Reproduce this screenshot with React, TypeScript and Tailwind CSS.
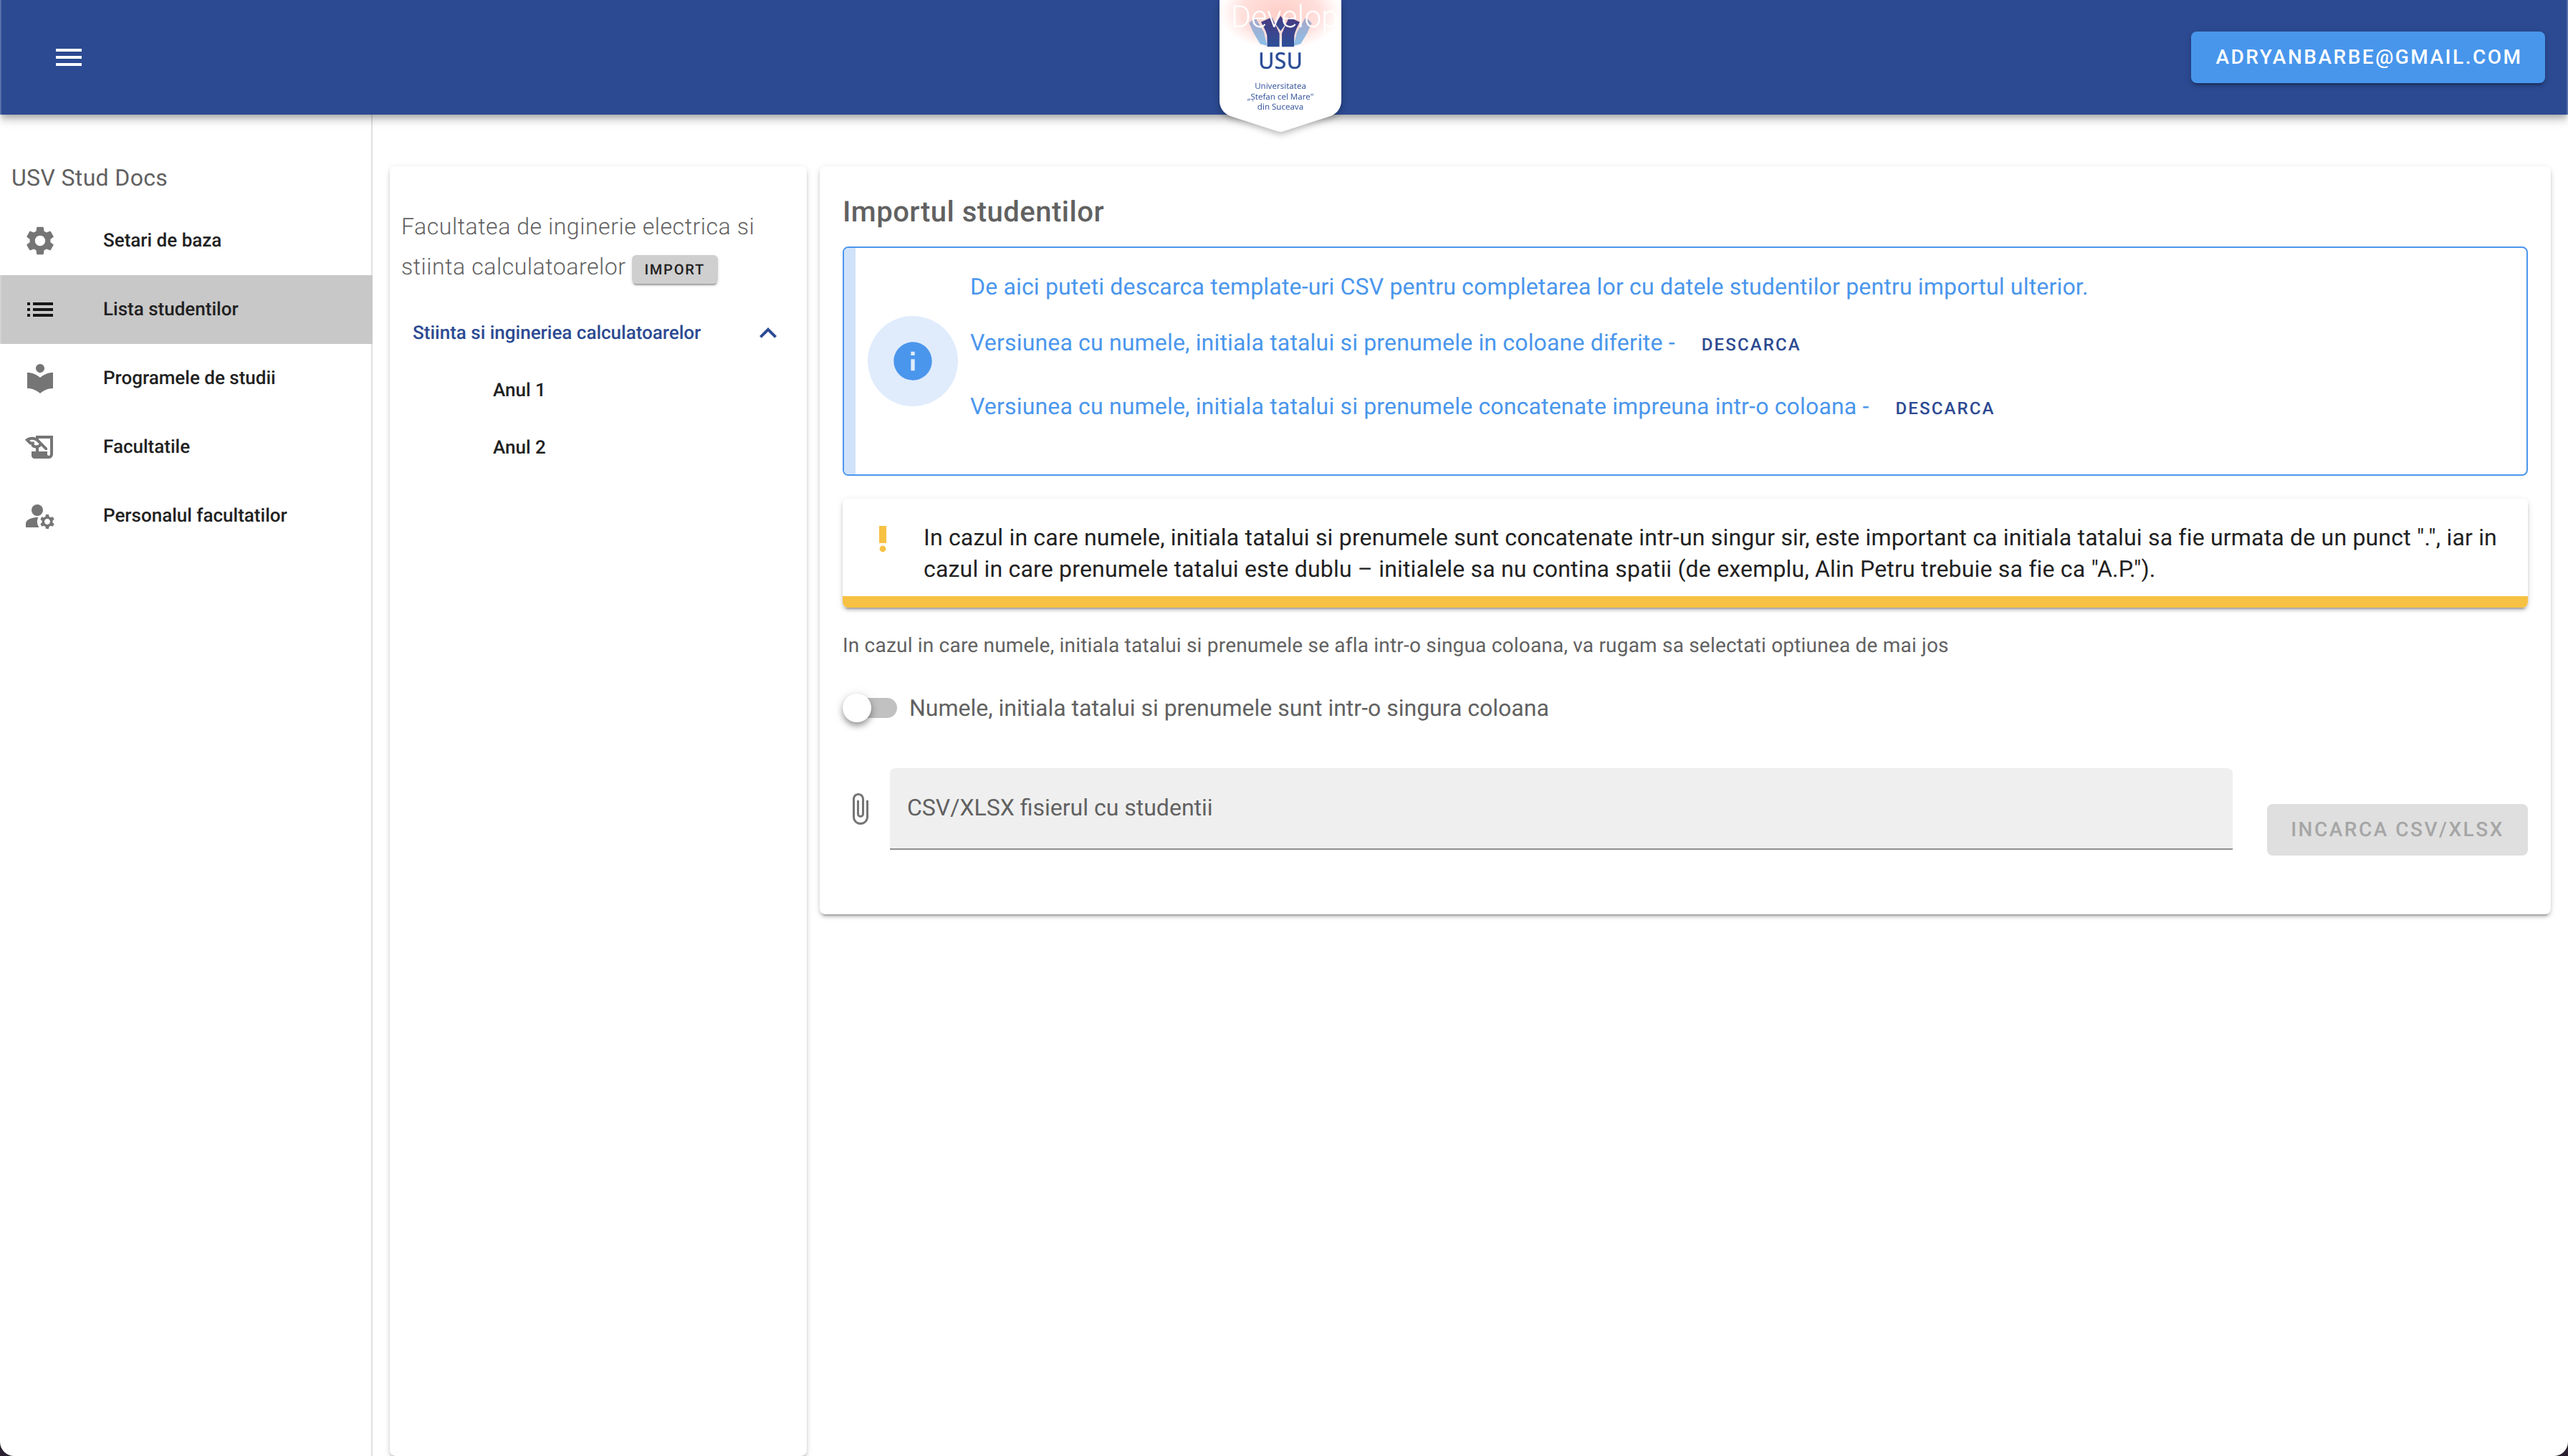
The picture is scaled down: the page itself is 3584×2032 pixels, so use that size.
import React from 'react';
import {
  MdAttachFile,
  MdExpandLess,
  MdHistoryEdu,
  MdInfo,
  MdList,
  MdLocalLibrary,
  MdManageAccounts,
  MdMenu,
  MdSettings,
} from 'react-icons/md';

const navItems = [
  { label: 'Setari de baza', icon: MdSettings },
  { label: 'Lista studentilor', icon: MdList, active: true },
  { label: 'Programele de studii', icon: MdLocalLibrary },
  { label: 'Facultatile', icon: MdHistoryEdu },
  { label: 'Personalul facultatilor', icon: MdManageAccounts },
];

function Logo() {
  return (
    <svg
      className="absolute left-[1702px] top-0 z-20 drop-shadow-[0_3px_5px_rgba(0,0,0,0.3)]"
      width="170"
      height="190"
      viewBox="0 0 170 190"
    >
      <defs>
        <radialGradient id="glow" cx="50%" cy="50%" r="50%">
          <stop offset="0%" stopColor="#ff9c90" stopOpacity="0.5" />
          <stop offset="65%" stopColor="#ffa99f" stopOpacity="0.36" />
          <stop offset="100%" stopColor="#ffb9b0" stopOpacity="0" />
        </radialGradient>
        <linearGradient id="wing" x1="0" y1="0" x2="0" y2="1">
          <stop offset="0%" stopColor="#4a3a82" />
          <stop offset="100%" stopColor="#2c4f97" />
        </linearGradient>
        <linearGradient id="side" x1="0" y1="0" x2="0" y2="1">
          <stop offset="0%" stopColor="#a9a6c8" />
          <stop offset="100%" stopColor="#8cc0e8" />
        </linearGradient>
      </defs>
      <path d="M0 0H170V140C170 150 165 158 155 162L90 183Q85 185 80 183L15 162C5 158 0 150 0 140Z" fill="#fff" />
      <ellipse cx="85" cy="18" rx="85" ry="52" fill="url(#glow)" />
      <g transform="translate(-62 0) scale(0.3333)">
        <path d="M310 97 335 72 372 135 386 192 356 184 330 140Z" fill="url(#side)" />
        <path d="M572 97 547 72 510 135 496 192 526 184 552 140Z" fill="url(#side)" />
        <path d="M360 92 405 72 437 140V196H386L385 150C382 130 370 112 360 92Z" fill="url(#wing)" />
        <path d="M522 92 477 72 447 140V196H498L499 150C502 130 512 112 522 92Z" fill="url(#wing)" />
        <path d="M442 66 464 100 442 130 420 100Z" fill="url(#wing)" />
      </g>
      <text x="85" y="96" textAnchor="middle" textLength="62" lengthAdjust="spacingAndGlyphs" fill="#2d4e97" fontFamily="Noto Sans, sans-serif" fontWeight="500" fontSize="32">
        USU
      </text>
      <g fill="#3c5aa0" fontFamily="Noto Sans, sans-serif" fontSize="11.5" textAnchor="middle">
        <text x="85" y="124">Universitatea</text>
        <text x="85" y="139">„Ștefan cel Mare"</text>
        <text x="85" y="153">din Suceava</text>
      </g>
      <text x="91" y="38" textAnchor="middle" fill="#fff" fontFamily="Roboto, sans-serif" fontWeight="300" fontSize="43">
        Develop
      </text>
    </svg>
  );
}

function Sidebar() {
  return (
    <aside className="w-[520px] shrink-0 border-r-2 border-[#e0e0e0] pt-[64px]">
      <div className="px-[16px] text-[32px] leading-[48px] tracking-[0.35px] text-[#616161] mb-[16px]">USV Stud Docs</div>
      {navItems.map((item) => (
        <div
          key={item.label}
          className={`flex h-[96px] items-center pl-[32px] ${item.active ? 'bg-[#c8c8c8] -mr-[2px]' : ''}`}
        >
          <item.icon className={`w-[48px] h-[48px] ${item.active ? 'text-[#181818]' : 'text-[#757575]'}`} />
          <span className="ml-[64px] pt-[1px] text-[26px] font-medium text-[#212121]">{item.label}</span>
        </div>
      ))}
    </aside>
  );
}

function TreePanel() {
  return (
    <section className="w-[582px] shrink-0 rounded-[8px] bg-white px-[16px] pt-[56px] shadow-[0_6px_2px_-4px_rgba(0,0,0,0.2),0_4px_4px_0_rgba(0,0,0,0.14),0_2px_10px_0_rgba(0,0,0,0.12)]">
      <div className="text-[32px] font-light leading-[56px] tracking-[0.55px] text-[#616161]">
        Facultatea de inginerie electrica si
        <br />
        stiinta calculatoarelor
        <span className="ml-[8px] inline-flex h-[40px] w-[120px] items-center justify-center rounded-[6px] bg-[#cfcfcf] align-[0px] text-[20px] font-medium tracking-[1.79px] text-[#212121] shadow-[0_4px_2px_-2px_rgba(0,0,0,0.3),0_2px_4px_0_rgba(0,0,0,0.14)]">
          IMPORT
        </span>
      </div>
      <div className="mt-[25px] flex h-[80px] items-center justify-between pl-[16px] pr-[14px] text-[#2c4a92]">
        <span className="text-[26px] font-medium">Stiinta si ingineriea calculatoarelor</span>
        <MdExpandLess className="h-[48px] w-[48px]" />
      </div>
      <div className="flex h-[80px] items-center pl-[128px] text-[26px] font-medium text-[#212121]">Anul 1</div>
      <div className="flex h-[80px] items-center pl-[128px] text-[26px] font-medium text-[#212121]">Anul 2</div>
    </section>
  );
}

function DownloadLink() {
  return <span className="ml-[37px] mt-[6px] text-[24px] font-medium tracking-[2.14px] text-[#2c4a92]">DESCARCA</span>;
}

function ImportPanel() {
  return (
    <section className="h-[1044px] flex-1 rounded-[8px] bg-white px-[32px] pt-[40px] shadow-[0_6px_2px_-4px_rgba(0,0,0,0.2),0_4px_4px_0_rgba(0,0,0,0.14),0_2px_10px_0_rgba(0,0,0,0.12)]">
      <h1 className="text-[40px] font-medium leading-[48px] tracking-[0.5px] text-[#616161]">Importul studentilor</h1>

      <div className="mt-[24px] flex h-[320px] items-center overflow-hidden rounded-[8px] border-2 border-[#4a96ec]">
        <div className="h-full w-[16px] bg-[#d0e2fa]" />
        <div className="ml-[17px] flex h-[126px] w-[126px] items-center justify-center rounded-full bg-[#e0ecfc]">
          <MdInfo className="h-[64px] w-[64px] text-[#4a96ec]" />
        </div>
        <div className="ml-[17px] self-start pt-[30px] text-[32px] leading-[48px] tracking-[0.17px] text-[#4a96ec]">
          <div>De aici puteti descarca template-uri CSV pentru completarea lor cu datele studentilor pentru importul ulterior.</div>
          <div className="mt-[27px] flex items-center">
            Versiunea cu numele, initiala tatalui si prenumele in coloane diferite -
            <DownloadLink />
          </div>
          <div className="mt-[35px] flex items-center">
            Versiunea cu numele, initiala tatalui si prenumele concatenate impreuna intr-o coloana -
            <DownloadLink />
          </div>
        </div>
      </div>

      <div className="mt-[32px] overflow-hidden rounded-[8px] shadow-[0_6px_2px_-4px_rgba(0,0,0,0.2),0_4px_4px_0_rgba(0,0,0,0.14),0_2px_10px_0_rgba(0,0,0,0.12)]">
        <div className="flex h-[136px] items-start bg-white pr-[40px]">
          <svg className="ml-[32px] mt-[32px] h-[48px] w-[48px] shrink-0 text-[#f7c143]" viewBox="0 0 24 24" fill="currentColor">
            <rect x="9.5" y="3" width="5" height="12" />
            <circle cx="12" cy="19" r="2.2" />
          </svg>
          <p className="ml-[33px] pt-[32px] text-[32px] leading-[44px] tracking-[0.19px] text-[#212121]">
            In cazul in care numele, initiala tatalui si prenumele sunt concatenate intr-un singur sir, este important ca initiala tatalui sa fie urmata de un punct ".", iar in cazul in care prenumele tatalui este dublu – initialele sa nu contina spatii (de exemplu, Alin Petru trebuie sa fie ca "A.P.").
          </p>
        </div>
        <div className="h-[16px] bg-[#f7c143]" />
      </div>

      <p className="mt-[37px] text-[28px] leading-[32px] tracking-[0.2px] text-[#616161]">
        In cazul in care numele, initiala tatalui si prenumele se afla intr-o singua coloana, va rugam sa selectati optiunea de mai jos
      </p>

      <div className="mt-[51px] flex h-[40px] items-center">
        <div className="relative h-[28px] w-[76px] rounded-full bg-[#c1c1c1]">
          <div className="absolute -top-[6px] left-0 h-[40px] w-[40px] rounded-full bg-white shadow-[0_6px_10px_-2px_rgba(0,0,0,0.3),0_4px_10px_0_rgba(0,0,0,0.14),0_2px_16px_0_rgba(0,0,0,0.12)]" />
        </div>
        <span className="ml-[17px] text-[32px] text-[#616161]">Numele, initiala tatalui si prenumele sunt intr-o singura coloana</span>
      </div>

      <div className="mt-[64px] flex items-start">
        <MdAttachFile className="mt-[33px] h-[48px] w-[48px] shrink-0 text-[#757575]" />
        <div className="ml-[18px] flex h-[114px] w-[1874px] items-center rounded-t-[8px] border-b-2 border-[#8f8f8f] bg-[#efefef] pl-[24px] pb-[2px] text-[32px] text-[#616161]">
          CSV/XLSX fisierul cu studentii
        </div>
        <div className="ml-[48px] mt-[50px] flex h-[72px] w-[364px] items-center justify-center rounded-[8px] bg-[#dfdfdf] text-[28px] font-medium tracking-[2.5px] text-[#a6a6a6]">
          INCARCA CSV/XLSX
        </div>
      </div>
    </section>
  );
}

export default function App() {
  return (
    <div className="h-[2032px] w-[3584px] overflow-hidden bg-[#2a2030] font-[Roboto,sans-serif] antialiased [text-rendering:geometricPrecision]">
      <div className="relative flex h-full flex-col overflow-hidden rounded-b-[20px] bg-white">
        <header className="relative z-10 flex h-[160px] shrink-0 items-center justify-between bg-[#2c4a92] pl-[72px] pr-[32px] shadow-[0_4px_8px_-2px_rgba(0,0,0,0.2),0_8px_10px_0_rgba(0,0,0,0.14),0_2px_20px_0_rgba(0,0,0,0.12)]">
          <MdMenu className="h-[48px] w-[48px] text-white" />
          <button className="flex h-[72px] w-[494px] items-center justify-center rounded-[8px] bg-[#4896ec] pl-[3px] text-[28px] font-medium tracking-[2.5px] text-white shadow-[0_6px_2px_-4px_rgba(0,0,0,0.2),0_4px_4px_0_rgba(0,0,0,0.14),0_2px_10px_0_rgba(0,0,0,0.12)]">
            ADRYANBARBE@GMAIL.COM
          </button>
        </header>
        <Logo />
        <div className="flex flex-1">
          <Sidebar />
          <main className="flex flex-1 gap-[18px] px-[24px] pt-[72px]">
            <TreePanel />
            <ImportPanel />
          </main>
        </div>
        <div className="pointer-events-none absolute inset-y-0 left-0 z-30 w-[2px] bg-white/20" />
        <div className="pointer-events-none absolute inset-y-0 right-0 z-30 w-[2px] bg-white/20" />
      </div>
    </div>
  );
}
